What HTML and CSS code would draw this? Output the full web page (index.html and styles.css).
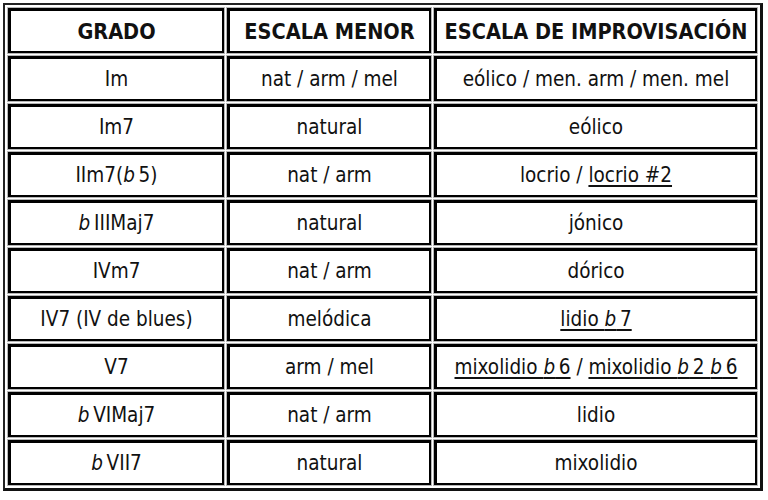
FILE: index.html
```html
<!DOCTYPE html>
<html lang="es">
<head>
<meta charset="utf-8">
<title>Grados</title>
<link rel="stylesheet" href="styles.css">
</head>
<body>
<table class="grid">
  <colgroup><col class="c1"><col class="c2"><col class="c3"></colgroup>
  <tr class="head"><th>GRADO</th><th>ESCALA MENOR</th><th>ESCALA DE IMPROVISACIÓN</th></tr>
  <tr><td>Im</td><td>nat / arm / mel</td><td>eólico / men. arm / men. mel</td></tr>
  <tr><td>Im7</td><td>natural</td><td>eólico</td></tr>
  <tr><td>IIm7(<i class="fl">b</i>&#8201;5)</td><td>nat / arm</td><td>locrio / <u>locrio #2</u></td></tr>
  <tr><td><i class="fl">b</i>&#8201;IIIMaj7</td><td>natural</td><td>jónico</td></tr>
  <tr><td>IVm7</td><td>nat / arm</td><td>dórico</td></tr>
  <tr><td>IV7 (IV de blues)</td><td>melódica</td><td><u>lidio <i class="fl">b</i>&#8201;7</u></td></tr>
  <tr><td>V7</td><td>arm / mel</td><td><u>mixolidio <i class="fl">b</i>&#8201;6</u> / <u>mixolidio <i class="fl">b</i>&#8201;2 <i class="fl">b</i>&#8201;6</u></td></tr>
  <tr><td><i class="fl">b</i>&#8201;VIMaj7</td><td>nat / arm</td><td>lidio</td></tr>
  <tr><td><i class="fl">b</i>&#8201;VII7</td><td>natural</td><td>mixolidio</td></tr>
</table>
</body>
</html>
```
FILE: styles.css
```css
html, body {
  margin: 0;
  padding: 0;
  background: #ffffff;
}
body {
  font-family: "DejaVu Sans Condensed", "DejaVu Sans", sans-serif;
  color: #111111;
}
.grid {
  margin: 3px 0 0 3px;
  width: 760px;
  table-layout: fixed;
  border-collapse: separate;
  border-spacing: 3px;
  border-top: 2px solid #222222;
  border-left: 2px solid #222222;
  border-right: 3px solid #111111;
  border-bottom: 3px solid #111111;
  background: #ffffff;
}
.c1 { width: 216px; }
.c2 { width: 204px; }
.grid th, .grid td {
  height: 40px;
  padding: 0;
  text-align: center;
  vertical-align: middle;
  border-top: 3px solid #000000;
  border-left: 3px solid #000000;
  border-right: 2px solid #000000;
  border-bottom: 2px solid #000000;
  box-shadow: 0 0 0 1px #b8b8b8;
  font-size: 20.5px;
  font-weight: normal;
  white-space: nowrap;
}
.grid th {
  font-weight: bold;
  font-size: 21.5px;
}
.fl {
  font-style: italic;
}
u {
  text-underline-offset: 3px;
  text-decoration-skip-ink: none;
}
```
